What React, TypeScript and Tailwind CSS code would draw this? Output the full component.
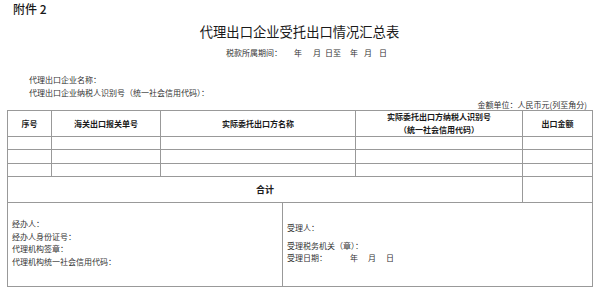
import React from "react";

const F = "font-['Noto_Sans_CJK_SC','Noto_Sans',sans-serif]";

export default function App() {
  return (
    <div className={`w-[605px] h-[292px] bg-white text-[#1a1a1a] ${F}`}>
      <div className="h-[18px] flex items-center pl-[13px] text-[12px] leading-none font-medium">附件 2</div>
      <div className="h-[28px] w-[599px] flex items-center justify-center text-[13.3px] leading-none">
        代理出口企业受托出口情况汇总表
      </div>
      <div className="h-[13px] flex items-center pl-[226px] text-[8px] leading-none text-[#333]">
        <span>税款所属期间：</span>
        <span className="ml-[12px]">年</span>
        <span className="ml-[11px]">月</span>
        <span className="ml-[4px]">日至</span>
        <span className="ml-[9px]">年</span>
        <span className="ml-[6px]">月</span>
        <span className="ml-[7px]">日</span>
      </div>
      <div className="mt-[14px] h-[13px] flex items-center pl-[29px] text-[8px] leading-none text-[#333]">代理出口企业名称：</div>
      <div className="h-[13px] flex items-center pl-[29px] text-[8px] leading-none text-[#333]">代理出口企业纳税人识别号（统一社会信用代码）：</div>
      <div className="h-[11px] w-[587px] flex items-center justify-end text-[8px] leading-none text-[#333]">金额单位：人民币元(列至角分)</div>

      <div className="ml-[7px] w-[586px] border border-[#999999] text-[8px] leading-none">
        <div className="flex h-[26px] border-b border-[#999999] font-bold">
          <div className="w-[44px] border-r border-[#999999] flex items-center justify-center">序号</div>
          <div className="w-[109px] border-r border-[#999999] flex items-center justify-center">海关出口报关单号</div>
          <div className="w-[195px] border-r border-[#999999] flex items-center justify-center">实际委托出口方名称</div>
          <div className="w-[167px] border-r border-[#999999] flex flex-col items-center justify-center">
            <div className="h-[13px] flex items-center">实际委托出口方纳税人识别号</div>
            <div className="h-[13px] flex items-center">（统一社会信用代码）</div>
          </div>
          <div className="flex-1 flex items-center justify-center">出口金额</div>
        </div>
        {[13, 14, 13].map((h, i) => (
          <div key={i} className="flex border-b border-[#999999]" style={{ height: h }}>
            <div className="w-[44px] border-r border-[#999999]" />
            <div className="w-[109px] border-r border-[#999999]" />
            <div className="w-[195px] border-r border-[#999999]" />
            <div className="w-[167px] border-r border-[#999999]" />
            <div className="flex-1" />
          </div>
        ))}
        <div className="flex h-[26px] border-b border-[#999999]">
          <div className="w-[515px] border-r border-[#999999] flex items-center justify-center text-[9px] font-bold">合计</div>
          <div className="flex-1" />
        </div>
        <div className="flex h-[83px] text-[#333]">
          <div className="w-[275px] border-r border-[#999999] pl-[4px] pt-[15px]">
            <div className="h-[12.5px] flex items-center">经办人：</div>
            <div className="h-[12.5px] flex items-center">经办人身份证号：</div>
            <div className="h-[12.5px] flex items-center">代理机构签章：</div>
            <div className="h-[12.5px] flex items-center">代理机构统一社会信用代码：</div>
          </div>
          <div className="flex-1 pl-[4px] pt-[19px]">
            <div className="h-[12px] flex items-center">受理人：</div>
            <div className="mt-[6px] h-[12px] flex items-center">受理税务机关（章）：</div>
            <div className="h-[12px] flex items-center">
              <span>受理日期：</span>
              <span className="ml-[23px]">年</span>
              <span className="ml-[10px]">月</span>
              <span className="ml-[10px]">日</span>
            </div>
          </div>
        </div>
      </div>
    </div>
  );
}
